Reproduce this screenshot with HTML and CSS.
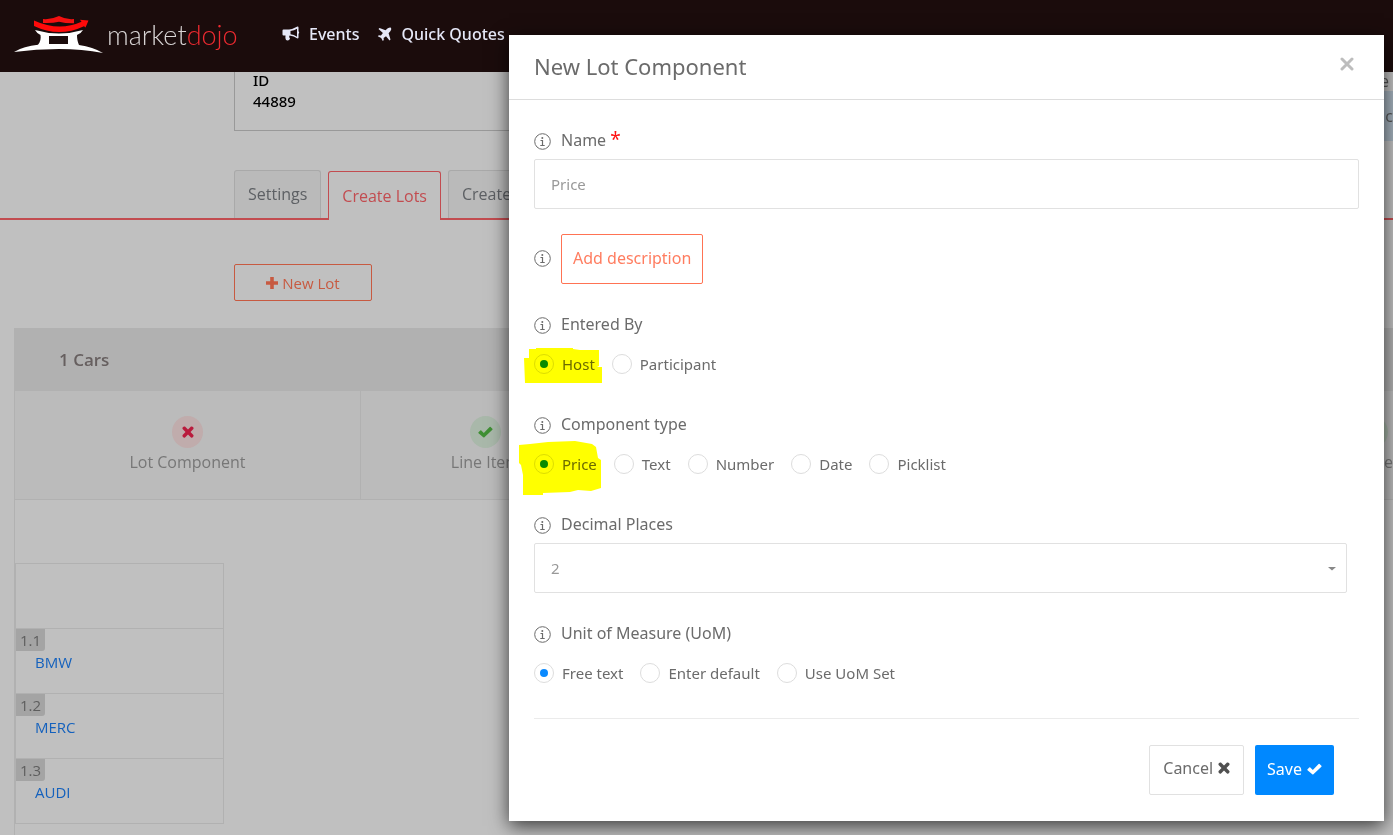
FILE: index.html
```html
<!DOCTYPE html>
<html lang="en">
<head>
<meta charset="utf-8">
<title>Market Dojo - Create Lots</title>
<link rel="stylesheet" href="styles.css">
</head>
<body>
<svg class="defs" aria-hidden="true">
  <symbol id="cross" viewBox="0 0 12 12"><path d="M3 0.6 6 3.5 9 0.6Q10 0 11 1Q12 2 11.4 3L8.5 6 11.4 9Q12 10 11 11Q10 12 9 11.4L6 8.5 3 11.4Q2 12 1 11Q0 10 0.6 9L3.5 6 0.6 3Q0 2 1 1Q2 0 3 0.6Z" fill="currentColor"/></symbol>
  <symbol id="check" viewBox="0 0 15 12"><path d="M0.5 6.2 2.3 4.4Q2.8 4 3.3 4.4L5.8 6.9 11.6 1Q12.1 0.6 12.6 1L14.4 2.8Q14.8 3.3 14.4 3.8L6.4 11.3Q5.8 11.8 5.3 11.3L0.5 7.2Q0.1 6.7 0.5 6.2Z" fill="currentColor"/></symbol>
  <symbol id="info" viewBox="0 0 18 18"><circle cx="8.500" cy="8.500" r="7.800" fill="none" stroke="currentColor" stroke-width="1"/><circle cx="8.300" cy="5" r="1" fill="currentColor"/><path d="M6.500 7.500H8.500V12M6.300 12.500H10.700" fill="none" stroke="currentColor" stroke-width="1.200"/></symbol>
</svg>

<header class="topbar">
  <a class="brand" href="#" aria-label="marketdojo">
    <svg class="brand-mark" width="90" height="40" viewBox="0 0 90 40" aria-hidden="true">
      <path d="M0 37Q10 31 24 29.800C26.500 27 27 23 26.500 20Q23 18.500 21 15Q45 22 69 15Q67 18.500 63 20C63 23 63.500 27 65 30Q79 32 89 38Q68 34 45 34Q22 34 0 37ZM35 21V29H54V21Z" fill="#fff" fill-rule="evenodd"/>
      <path d="M20 5.500Q45 17 67.500 6.800L66 4.800 74.500 5.500 71.500 12.500 70 11.200Q45 23 20 11Z" fill="#ff0a0a"/>
      <path d="M29 4Q37 4.800 45 1Q52 4.800 60 4V8.300Q52 8.500 45 6.800Q38 8.500 29 8Z" fill="#f51010"/>
    </svg>
    <span class="wordmark">market<span class="wordmark-red">dojo</span></span>
  </a>
  <nav class="nav">
    <a href="#"><svg width="18" height="16" viewBox="0 0 18 16" aria-hidden="true"><path fill="currentColor" fill-rule="evenodd" d="M0.500 4.500Q0.500 3.500 1.500 3.500H7Q11 3 15.500 0.500Q16.500 0.300 16.500 1.500V5Q18 6.300 16.500 8V11.500Q16.500 12.500 15.500 12.500Q12 10 7.500 9.500Q6.500 11 8 12.500L7.500 13.500Q6 15 4 14Q3 12 3.500 9.500H1.500Q0.500 9.500 0.500 8.500ZM8.500 5V8.300Q12 8.800 15 10.700V2.700Q12 4.500 8.500 5Z"/></svg>Events</a>
    <a href="#"><svg width="15" height="15" viewBox="0 0 15 15" aria-hidden="true"><path fill="currentColor" d="M2.500 1 8.500 3.200 10.800 1.300Q13 0 14 0.800Q14.800 2 13.500 4L11.600 6.300 13.500 12.500 12.500 13.500 9 9.200 6.600 11 6.800 13 5.800 14 4.200 10.900 0.800 9.200 1.800 8.200 4 8.400 5.900 6 1.500 2Z"/></svg>Quick Quotes</a>
  </nav>
</header>

<main>
  <div class="summary">
    <div class="summary-box"><span>ID</span><span>44889</span></div>
    <div class="summary-side"><span>e</span><div class="summary-note">c</div></div>
  </div>

  <nav class="tabs">
    <a class="tab" href="#">Settings</a>
    <a class="tab tab-active" href="#">Create Lots</a>
    <a class="tab" href="#">Create</a>
  </nav>

  <button class="new-lot" type="button"><svg width="12" height="12" viewBox="0 0 12 12" aria-hidden="true"><path d="M4.200 0H7.800V4.200H12V7.800H7.800V12H4.200V7.800H0V4.200H4.200Z" fill="currentColor"/></svg>New Lot</button>

  <section class="lot">
    <h2>1 Cars</h2>
    <div class="steps">
      <div class="step"><span class="badge badge-bad"><svg width="12" height="12"><use href="#cross"/></svg></span>Lot Component</div>
      <div class="step"><span class="badge badge-ok"><svg width="15" height="12"><use href="#check"/></svg></span>Line Item</div>
      <div class="step step-last"><span class="badge badge-ok"></span>te</div>
    </div>
    <table class="items">
      <tbody>
        <tr><td></td></tr>
        <tr><td><span class="num">1.1</span><a href="#">BMW</a></td></tr>
        <tr><td><span class="num">1.2</span><a href="#">MERC</a></td></tr>
        <tr><td><span class="num">1.3</span><a href="#">AUDI</a></td></tr>
      </tbody>
    </table>
  </section>
</main>

<form class="modal" role="dialog" aria-labelledby="modal-title">
  <div class="modal-head">
    <h1 id="modal-title">New Lot Component</h1>
    <button class="close" type="button" aria-label="Close"><svg width="14" height="14" viewBox="0 0 14 14"><path d="M2 2 12 12M12 2 2 12" stroke="currentColor" stroke-width="3" stroke-linecap="round"/></svg></button>
  </div>
  <div class="modal-body">
    <div class="field">
      <div class="field-label"><svg width="18" height="18"><use href="#info"/></svg><label for="name">Name <span class="required">*</span></label></div>
      <input class="control" id="name" type="text" value="Price">
    </div>
    <div class="description">
      <svg width="18" height="18"><use href="#info"/></svg>
      <button class="outline" type="button">Add description</button>
    </div>
    <fieldset class="field field-spaced">
      <legend class="field-label"><svg width="18" height="18"><use href="#info"/></svg>Entered By</legend>
      <div class="options">
        <label class="option"><input type="radio" name="entered" checked>Host
          <svg class="marker marker-host" width="80" height="38" viewBox="522 347 80 38" aria-hidden="true"><path d="M524 358H529V349H536V348H573V349L580 350H599V366L597 367H602V383H525Z" fill="#ff0"/></svg></label>
        <label class="option"><input type="radio" name="entered">Participant</label>
      </div>
    </fieldset>
    <fieldset class="field field-spaced">
      <legend class="field-label"><svg width="18" height="18"><use href="#info"/></svg>Component type</legend>
      <div class="options">
        <label class="option"><input type="radio" name="type" checked>Price
          <svg class="marker marker-price" width="84" height="56" viewBox="518 441 84 56" aria-hidden="true"><path d="M519 445 530 444 548 442 575 441 592 444 596 447 598 458 601 460V488L591 491 578 490 570 492 543 493V495H523V475L521 465 519 463Z" fill="#ff0"/></svg></label>
        <label class="option"><input type="radio" name="type">Text</label>
        <label class="option"><input type="radio" name="type">Number</label>
        <label class="option"><input type="radio" name="type">Date</label>
        <label class="option"><input type="radio" name="type">Picklist</label>
      </div>
    </fieldset>
    <div class="field field-spaced">
      <div class="field-label"><svg width="18" height="18"><use href="#info"/></svg><label for="places">Decimal Places</label></div>
      <div class="select-wrap">
        <select class="control" id="places"><option>2</option></select>
        <svg class="caret" width="8" height="4" viewBox="0 0 8 4" aria-hidden="true"><path d="M0 0H8L4 3.500Z" fill="#888"/></svg>
      </div>
    </div>
    <fieldset class="field">
      <legend class="field-label"><svg width="18" height="18"><use href="#info"/></svg>Unit of Measure (UoM)</legend>
      <div class="options">
        <label class="option"><input type="radio" name="uom" checked>Free text</label>
        <label class="option"><input type="radio" name="uom">Enter default</label>
        <label class="option"><input type="radio" name="uom">Use UoM Set</label>
      </div>
    </fieldset>
    <div class="actions">
      <button class="cancel" type="button">Cancel<svg width="12" height="12"><use href="#cross"/></svg></button>
      <button class="save" type="submit">Save<svg width="15" height="12"><use href="#check"/></svg></button>
    </div>
  </div>
</form>
</body>
</html>
```

FILE: styles.css
```css
* { box-sizing: border-box; }
body {
  margin: 0;
  min-height: 100vh;
  overflow: hidden;
  background: #c0c0c0;
  color: #5e5e5e;
  font: 16px/24px "Open Sans", "Noto Sans", sans-serif;
}
a { text-decoration: none; }
button, input, select { font: inherit; color: inherit; margin: 0; }
button { cursor: pointer; }
.defs { position: absolute; width: 0; height: 0; }

.topbar { display: flex; align-items: center; height: 72px; padding-left: 14px; background: #1b0c0c; }
.brand { display: flex; align-items: center; gap: 3px; width: 268px; padding-bottom: 2px; }
.wordmark { color: #d8d4d4; font: 300 27px/40px Lato, sans-serif; }
.wordmark-red { color: #ee2a30; }
.nav { display: flex; gap: 18px; padding-bottom: 4px; }
.nav a { display: flex; align-items: center; gap: 9px; color: #e6e8f8; font-family: "Noto Sans", sans-serif; font-weight: 500; }

.summary { display: flex; justify-content: space-between; padding-left: 234px; }
.summary-box {
  display: flex; flex-direction: column; justify-content: flex-end;
  width: 60%; height: 59px;
  border: 1px solid #999; border-top: 0;
  padding: 0 18px 18px;
  color: #000; font: 500 15px/21px "Noto Sans", sans-serif;
}
.summary-side { width: 60px; text-align: right; line-height: 19px; color: #555; }
.summary-side > span { padding-right: 4px; }
.summary-note { background: #a3b0bb; line-height: 50px; }

.tabs {
  display: flex; align-items: flex-end; gap: 7px;
  height: 50px; margin-top: 29px; padding-left: 234px;
  border-bottom: 2px solid #c24c50;
}
.tab { height: 48px; padding: 0 13px; border: 1px solid #a9a9a9; border-bottom: 0; border-radius: 3px 3px 0 0; background: #bababa; color: #5d6064; line-height: 46px; }
.tab-active { height: 49px; margin-bottom: -2px; border-color: #c24c50; background: #c0c0c0; color: #c24c50; line-height: 49px; }

.new-lot {
  display: flex; align-items: center; justify-content: center; gap: 4px;
  width: 138px; height: 37px; margin: 44px 0 27px 234px;
  border: 1px solid #c75a41; border-radius: 2px;
  background: none; color: #c75a41; font-size: 15px;
}

.lot { margin-left: 14px; min-height: 507px; border-left: 1px solid #b1b1b1; }
.lot h2 { margin: 0; padding-left: 44px; background: #b1b1b1; color: #665f5f; font: 600 17px/63px "Open Sans", sans-serif; }
.steps { display: grid; grid-template-columns: 346px 250px 1fr; border-bottom: 1px solid #b1b1b1; }
.step { display: flex; flex-direction: column; align-items: center; gap: 2px; padding: 25px 0; border-right: 1px solid #b1b1b1; background: #bbb; color: #777; }
.step-last { align-items: flex-end; border: 0; }
.badge { display: grid; place-items: center; width: 31px; height: 32px; border-radius: 50%; }
.step-last .badge { margin-right: 5px; }
.badge-bad { background: #c0acac; color: #b91b3c; }
.badge-ok { background: #a9b8aa; color: #3f8f34; }
.items { width: 209px; margin-top: 63px; border-collapse: collapse; }
.items td { height: 65px; padding: 0; border: 1px solid #b1b1b1; vertical-align: top; font-size: 15px; line-height: 22px; }
.items a { display: block; padding-left: 19px; color: #1461bd; }
.num { display: block; width: 29px; border-radius: 0 0 3px; background: #a4a4a4; text-align: center; }

.modal {
  position: absolute; top: 35px; left: 509px; right: 9px;
  background: #fff; color: #6b6b6b;
  box-shadow: 0 5px 18px rgba(0, 0, 0, .7);
  font-family: "Noto Sans", sans-serif;
}
.modal-head { display: flex; align-items: center; justify-content: space-between; padding: 0 30px 2px 25px; height: 65px; border-bottom: 1px solid #ddd; }
.modal-head h1 { margin: 0; font-size: 22px; line-height: 32px; font-weight: 400; }
.close { display: flex; padding: 0 0 4px; border: 0; background: none; color: #bdbdbd; }
.modal-body { padding: 28px 25px 26px; }
.field { margin: 0 0 25px; padding: 0; border: 0; }
.field-spaced { margin-bottom: 28px; }
.field-label { display: flex; align-items: center; gap: 9px; height: 24px; margin-bottom: 7px; padding: 0; }
.field-label svg { margin-top: 3px; }
.required { color: #f11; font-size: 19px; line-height: 20px; }
.control { display: block; width: 100%; height: 50px; padding: 0 16px; border: 1px solid #e1e1e1; border-radius: 2px; background: #fff; color: #999; font-size: 15px; appearance: none; }
.select-wrap { position: relative; margin-right: 12px; }
.caret { position: absolute; right: 11px; top: 24px; }
.description { display: flex; align-items: center; gap: 9px; margin-bottom: 28px; }
.outline { height: 50px; padding: 0 11px 2px; border: 1px solid #ff7353; border-radius: 2px; background: #fff; color: #ff7d60; }
.options { display: flex; gap: 17px; padding: 11px 0 10px; }
.option { position: relative; display: flex; align-items: center; gap: 8px; height: 20px; font-size: 15px; }
.option input { appearance: none; display: grid; place-items: center; width: 20px; height: 20px; border: 1px solid #ddd; border-radius: 50%; background: #fff; }
.option input:checked::before { content: ""; width: 8px; height: 8px; border-radius: 50%; background: #0a8aff; }
.marker { position: absolute; mix-blend-mode: multiply; pointer-events: none; }
.marker-host { left: -12px; top: -7px; }
.marker-price { left: -16px; top: -13px; }
.actions { display: flex; justify-content: flex-end; gap: 11px; padding: 26px 25px 0 0; border-top: 1px solid #ebebeb; }
.actions button { display: flex; align-items: center; gap: 5px; height: 50px; border-radius: 2px; }
.cancel { padding: 0 13px 5px; border: 1px solid #e1e1e1; background: #fff; }
.cancel svg { color: #505050; }
.save { padding: 0 12px 2px; border: 0; background: #08f; color: #fff; }
```
